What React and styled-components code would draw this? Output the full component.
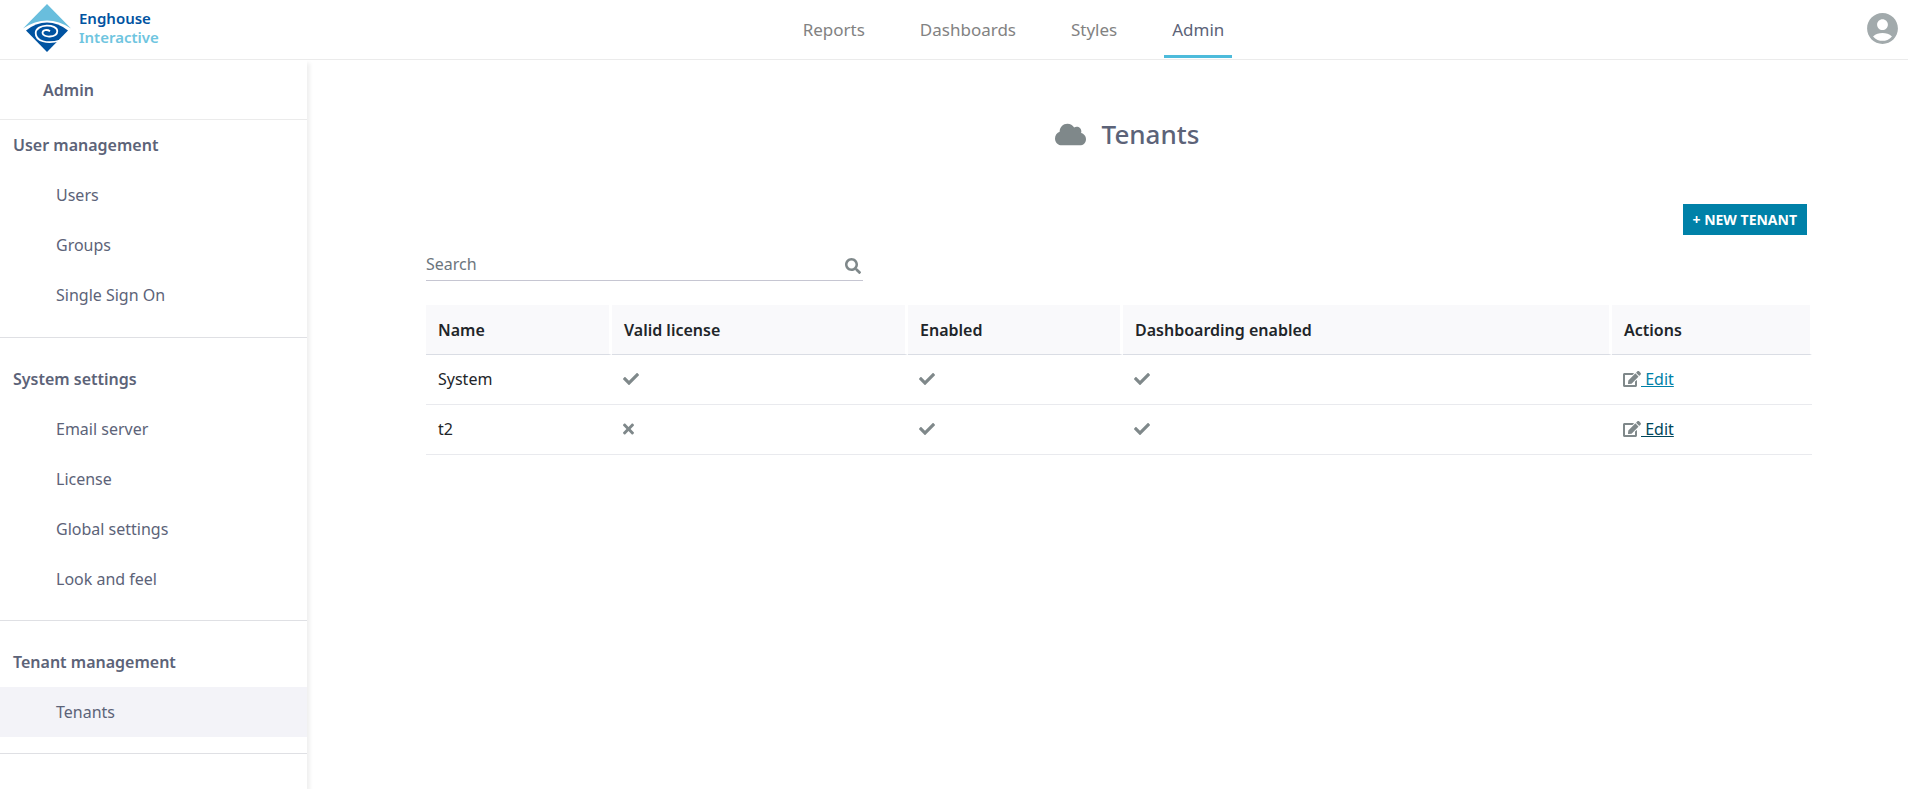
import React from 'react';
import styled, { createGlobalStyle } from 'styled-components';
import { FaCheck, FaCloud, FaEdit, FaSearch, FaTimes } from 'react-icons/fa';
import { MdAccountCircle } from 'react-icons/md';

const GlobalStyle = createGlobalStyle`
  * {
    box-sizing: border-box;
  }

  body {
    margin: 0;
    background: #fff;
    color: #212529;
    font-family: 'Noto Sans', 'Open Sans', sans-serif;
    font-size: 16px;
    line-height: 24px;
  }
`;

const Page = styled.div`
  display: flex;
  flex-direction: column;
  min-height: 100vh;
`;

const Header = styled.header`
  display: flex;
  align-items: stretch;
  height: 60px;
  border-bottom: 1px solid #ebebeb;
`;

const Logo = styled.a`
  display: flex;
  align-items: center;
  gap: 8px;
  width: 176px;
  padding-left: 23px;
  padding-bottom: 3px;
  text-decoration: none;
`;

const LogoText = styled.span`
  display: flex;
  flex-direction: column;
  font-size: 15px;
  font-weight: 600;
  line-height: 19px;
  color: #0053a1;
`;

const LogoSubText = styled.span`
  color: #6fc5e0;
`;

const TopNav = styled.nav`
  display: flex;
  flex: 1;
  justify-content: center;
  gap: 39px;
`;

const TopLink = styled.a`
  padding: 17px 8px 0;
  margin-bottom: 1px;
  border-bottom: 3px solid ${(props) => (props.$active ? '#4dbbdb' : 'transparent')};
  color: ${(props) => (props.$active ? '#5c6378' : '#828282')};
  font-size: 17px;
  line-height: 26px;
  text-decoration: none;
`;

const UserButton = styled.button`
  display: flex;
  align-items: center;
  padding: 0 7px 2px 13px;
  border: 0;
  background: none;
  color: #a2aaac;
  cursor: pointer;
`;

const Body = styled.div`
  display: flex;
  flex: 1;
`;

const Sidebar = styled.aside`
  flex: none;
  width: 307px;
  box-shadow: 3px 3px 4px #f0f0f0;
  color: #5c6378;
`;

const SidebarTitle = styled.div`
  padding: 18px 43px 17px;
  border-bottom: 1px solid #ebebeb;
  font-weight: 600;
`;

const Group = styled.section`
  padding: 16px 0;
  border-bottom: 1px solid #dfe0e4;

  &:first-of-type {
    padding: 0 0 17px;
  }
`;

const GroupTitle = styled.h2`
  margin: 0;
  padding: 13px;
  font-size: 16px;
  font-weight: 600;
`;

const GroupLink = styled.a`
  display: block;
  padding: 13px 56px;
  background: ${(props) => (props.$active ? '#f3f3f8' : 'transparent')};
  color: inherit;
  text-decoration: none;
`;

const Main = styled.main`
  display: flex;
  flex: 1;
  flex-direction: column;
  padding: 56px 96px 0 119px;
`;

const Title = styled.h1`
  display: flex;
  align-items: center;
  justify-content: center;
  gap: 16px;
  margin: 0;
  padding-left: 16px;
  color: #5c6378;
  font-size: 26px;
  font-weight: 500;
  line-height: 36px;

  svg {
    color: #7f888a;
  }
`;

const NewButton = styled.button`
  align-self: flex-end;
  margin: 52px 5px 0 0;
  padding: 0 10px;
  border: 0;
  background: #0081a8;
  color: #fff;
  font-family: inherit;
  font-size: 14px;
  font-weight: 700;
  line-height: 31px;
  cursor: pointer;
`;

const Search = styled.form`
  display: flex;
  align-items: center;
  width: 437px;
  height: 31px;
  margin-top: 15px;
  padding-right: 2px;
  border-bottom: 1px solid #c6c6d2;
  color: #7f888a;
`;

const SearchInput = styled.input`
  flex: 1;
  height: 30px;
  padding: 0 0 3px;
  border: 0;
  outline: 0;
  background: none;
  font: inherit;

  &::placeholder {
    color: #6c757d;
    opacity: 1;
  }
`;

const IconButton = styled.button`
  display: flex;
  padding: 2px 0 0;
  border: 0;
  background: none;
  color: inherit;
  font-size: 16px;
`;

const Table = styled.table`
  width: 100%;
  margin-top: 24px;
  border-spacing: 0;
  table-layout: fixed;
`;

const Th = styled.th`
  width: ${(props) => props.$width || 'auto'};
  height: 50px;
  padding: 0 12px;
  border-right: 3px solid #fff;
  border-bottom: 1px solid #dadde4;
  background: #f9f9fb;
  font-weight: 600;
  text-align: left;

  &:last-child {
    border-right-width: 2px;
  }
`;

const Td = styled.td`
  height: 50px;
  padding: 0 11px 2px;
  border-bottom: 1px solid #e9eaee;

  &:first-child {
    padding-left: 12px;
  }
`;

const YesIcon = styled(FaCheck)`
  display: block;
  width: 16px;
  color: #7f888a;
`;

const NoIcon = styled(FaTimes)`
  display: block;
  width: 11px;
  color: #7f888a;
`;

const EditIcon = styled(FaEdit)`
  width: 18px;
  height: 16px;
  color: #7f888a;
  vertical-align: -2px;
`;

const EditLink = styled.a`
  color: ${(props) => (props.$visited ? '#00475c' : '#0081a8')};
`;

const topLinks = ['Reports', 'Dashboards', 'Styles', 'Admin'];

const groups = [
  { title: 'User management', items: ['Users', 'Groups', 'Single Sign On'] },
  { title: 'System settings', items: ['Email server', 'License', 'Global settings', 'Look and feel'] },
  { title: 'Tenant management', items: ['Tenants'] },
];

const tenants = [
  { name: 'System', license: true, enabled: true, dashboarding: true, visited: false },
  { name: 't2', license: false, enabled: true, dashboarding: true, visited: true },
];

function LogoMark() {
  return (
    <svg width="48" height="48" viewBox="0 0 48 48" aria-hidden="true">
      <path d="M24 0 L48 24.5 Q36 16.5 24 16.5 Q12 16.5 0 24.5 Z" fill="#69bedd" />
      <path d="M3 26.5 Q13 18.5 24 18.5 Q35 18.5 45 26.5 L24 48 Z" fill="#0053a1" />
      <path
        d="M27 27.2 C24 25 19.5 26 19.5 29 C19.8 34 34.3 34 34.3 27 C34 19.5 13 19.5 12.7 29 C12.5 37 24 40.5 37 36.5"
        fill="none"
        stroke="#fff"
        strokeWidth="1.8"
      />
    </svg>
  );
}

function Flag({ on }) {
  return on ? <YesIcon aria-label="Yes" /> : <NoIcon aria-label="No" />;
}

export default function App() {
  return (
    <Page>
      <GlobalStyle />
      <Header>
        <Logo href="#">
          <LogoMark />
          <LogoText>
            Enghouse
            <LogoSubText>Interactive</LogoSubText>
          </LogoText>
        </Logo>
        <TopNav>
          {topLinks.map((link) => (
            <TopLink key={link} href="#" $active={link === 'Admin'}>{link}</TopLink>
          ))}
        </TopNav>
        <UserButton type="button" aria-label="Account">
          <MdAccountCircle size={37} />
        </UserButton>
      </Header>
      <Body>
        <Sidebar>
          <SidebarTitle>Admin</SidebarTitle>
          {groups.map((group) => (
            <Group key={group.title}>
              <GroupTitle>{group.title}</GroupTitle>
              {group.items.map((item) => (
                <GroupLink key={item} href="#" $active={item === 'Tenants'}>{item}</GroupLink>
              ))}
            </Group>
          ))}
        </Sidebar>
        <Main>
          <Title>
            <FaCloud size={31} />
            Tenants
          </Title>
          <NewButton type="button">+ NEW TENANT</NewButton>
          <Search>
            <SearchInput type="text" placeholder="Search" aria-label="Search" />
            <IconButton type="button" aria-label="Search">
              <FaSearch />
            </IconButton>
          </Search>
          <Table>
            <thead>
              <tr>
                <Th $width="186px">Name</Th>
                <Th $width="296px">Valid license</Th>
                <Th $width="215px">Enabled</Th>
                <Th>Dashboarding enabled</Th>
                <Th $width="200px">Actions</Th>
              </tr>
            </thead>
            <tbody>
              {tenants.map((tenant) => (
                <tr key={tenant.name}>
                  <Td>{tenant.name}</Td>
                  <Td><Flag on={tenant.license} /></Td>
                  <Td><Flag on={tenant.enabled} /></Td>
                  <Td><Flag on={tenant.dashboarding} /></Td>
                  <Td>
                    <EditLink href="#" $visited={tenant.visited}><EditIcon /> Edit</EditLink>
                  </Td>
                </tr>
              ))}
            </tbody>
          </Table>
        </Main>
      </Body>
    </Page>
  );
}
